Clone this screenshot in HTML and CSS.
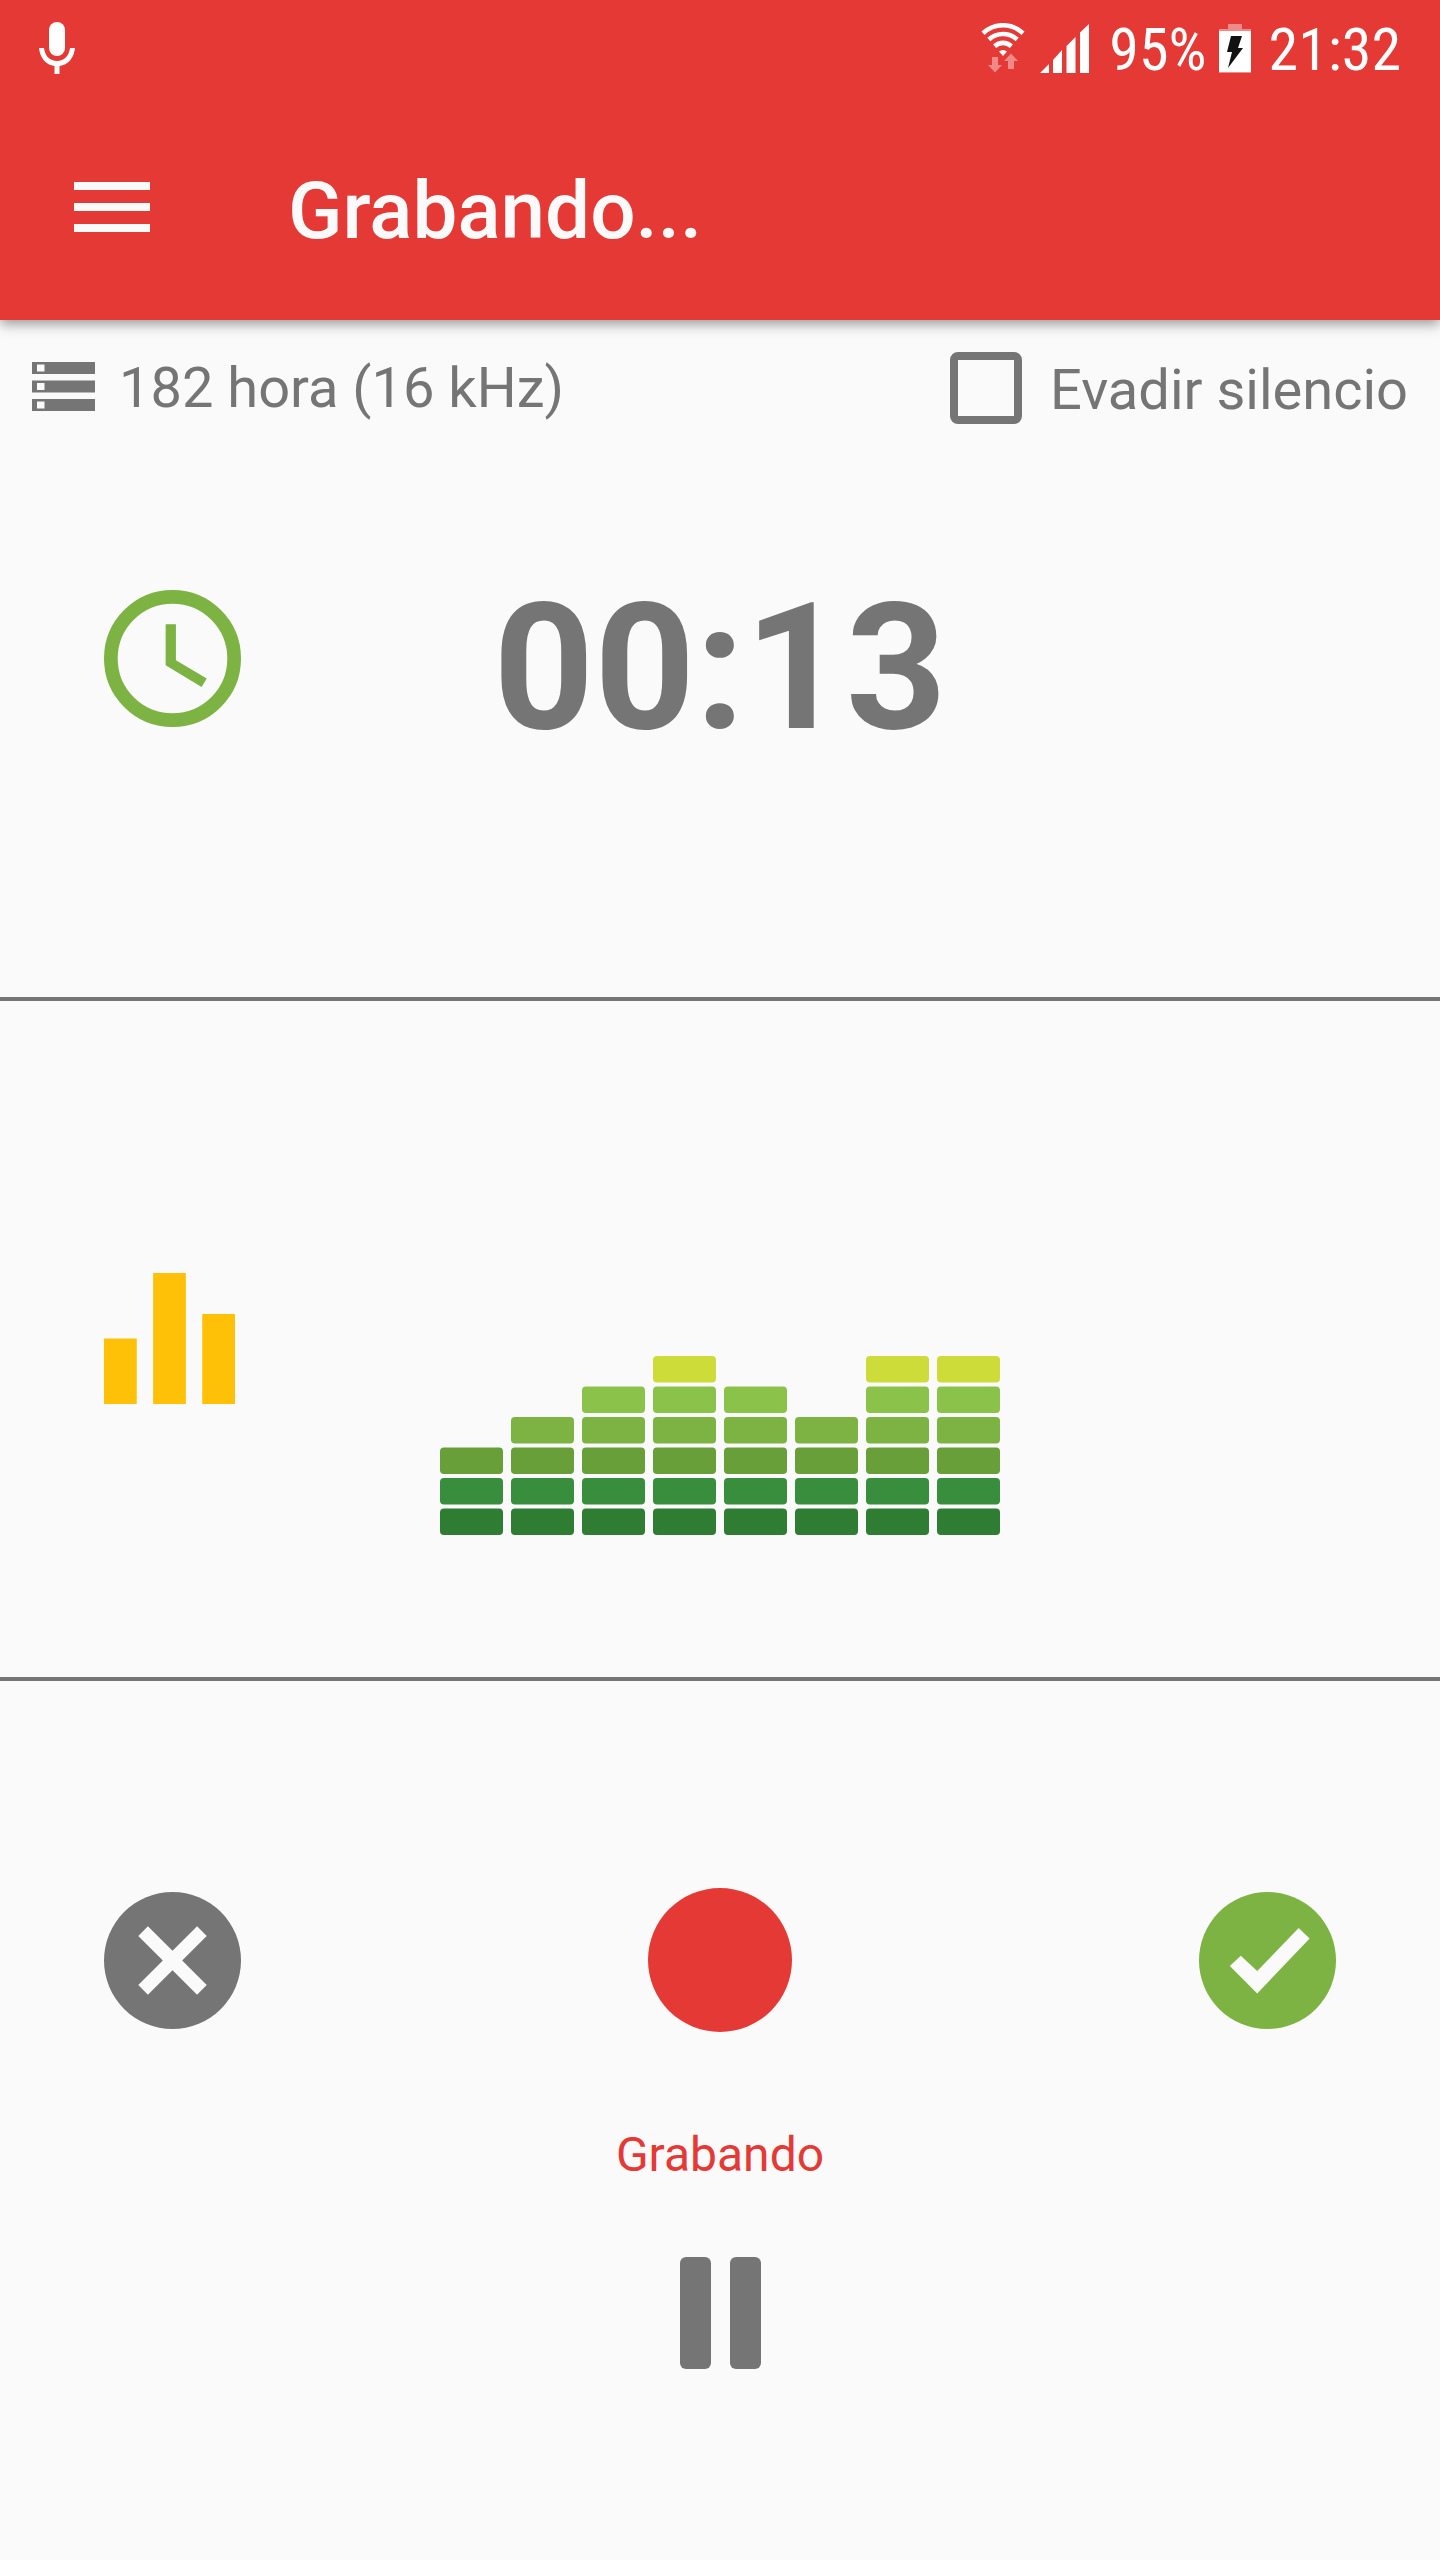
FILE: index.html
```html
<!DOCTYPE html>
<html lang="es">
<head>
    <meta charset="UTF-8">
    <meta name="viewport" content="width=device-width, initial-scale=1.0">
    <title>Grabando...</title>
    <link rel="stylesheet" href="styles.css">
</head>
<body>
    <header class="header">
        <!-- Barra de estado -->
        <div class="statusBar">
            <svg class="micIcon" viewBox="0 0 36 52" aria-hidden="true">
                <rect x="10" y="0" width="16" height="34" rx="8" fill="#fff"/>
                <path d="M0 26h5c1 8 6 13 13 13s12-5 13-13h5c-1 10-7 17-15.500 18v8h-5v-8C7 43 1 36 0 26z" fill="#fff"/>
            </svg>
            <div class="statusRight">
                <svg class="wifiIcon" viewBox="0 0 44 50" aria-hidden="true">
                    <g fill="none" stroke="#fff" stroke-width="4.600">
                        <path d="M2 10.200c11.500-10.600 28.500-10.600 40 0"/>
                        <path d="M7.800 16.500c8.200-7.300 20.200-7.300 28.400 0"/>
                        <path d="M13.600 23.200c5-4.400 11.800-4.400 16.800 0"/>
                    </g>
                    <path d="M18 28.500c2.500-2 5.500-2 8 0L22 33z" fill="#fff"/>
                    <path d="M11 34h6v8h4l-7 7.500L7 42h4zM27 46v-8h-4l7-7.500 7 7.500h-4v8z" fill="#f08a88"/>
                </svg>
                <svg class="signalIcon" viewBox="0 0 49 49" aria-hidden="true">
                    <path d="M0 49l9-9v9zM13 49V36l9-10v23zM26.500 49V22l9-9v36zM40 49V8.500L49 0v49z" fill="#fff"/>
                </svg>
                <span class="battery">95%</span>
                <svg class="batteryIcon" viewBox="0 0 32 49" aria-hidden="true">
                    <path d="M9 0h14v5h9v3H0V5h9zM0 47h32v2H0z" fill="#f08a88"/>
                    <path d="M0 7h32v41H0z" fill="#fff"/>
                    <path d="M12 12h11l-4 12h5L9 44l4-16H8z" fill="#111"/>
                </svg>
                <time class="clock">21:32</time>
            </div>
        </div>

        <!-- Barra de la aplicación -->
        <div class="toolbar">
            <button class="menuBtn" aria-label="Menú">
                <svg viewBox="0 0 76 50"><path d="M0 0h76v8H0zM0 21h76v8H0zM0 42h76v8H0z" fill="#fafafa"/></svg>
            </button>
            <h1>Grabando...</h1>
        </div>
    </header>

    <main>
        <!-- Tiempo -->
        <section class="timer">
            <div class="info">
                <div class="storage">
                    <svg viewBox="0 0 63 49" aria-hidden="true">
                        <path d="M0 0h63v12H0zM0 18.500h63v12H0zM0 37h63v12H0z" fill="#757575"/>
                        <path d="M5 2.500h7.500v7H5zM5 21h7.500v7H5zM5 39.500h7.500v7H5z" fill="#fafafa"/>
                    </svg>
                    <span>182 hora (16 kHz)</span>
                </div>
                <label class="silence">
                    <input type="checkbox">
                    <span>Evadir silencio</span>
                </label>
            </div>
            <div class="row timeRow">
                <svg class="clockIcon" viewBox="2 2 20 20" aria-hidden="true">
                    <circle cx="12" cy="12" r="9" fill="none" stroke="#7cb342" stroke-width="2"/>
                    <path d="M12.500 7H11v6l5.250 3.150.750-1.230-4.500-2.670z" fill="#7cb342"/>
                </svg>
                <div class="time">00:13</div>
            </div>
        </section>

        <!-- Nivel de sonido -->
        <section class="level">
            <div class="row">
                <svg class="levelIcon" viewBox="4 4 16 16" aria-hidden="true">
                    <path d="M10 20h4V4h-4v16zm-6 0h4v-8H4v8zM16 9v11h4V9h-4z" fill="#ffc107"/>
                </svg>
                <svg class="chart" viewBox="0 0 560 179" aria-hidden="true">
                    <defs>
                        <g id="n3">
                            <rect y="152.500" width="63" height="26.500" rx="4" fill="#2e7d32"/>
                            <rect y="122" width="63" height="26.500" rx="4" fill="#388e3c"/>
                            <rect y="91.500" width="63" height="26.500" rx="4" fill="#689f38"/>
                        </g>
                        <g id="n4">
                            <use href="#n3"/>
                            <rect y="61" width="63" height="26.500" rx="4" fill="#7cb342"/>
                        </g>
                        <g id="n5">
                            <use href="#n4"/>
                            <rect y="30.500" width="63" height="26.500" rx="4" fill="#8bc34a"/>
                        </g>
                        <g id="n6">
                            <use href="#n5"/>
                            <rect width="63" height="26.500" rx="4" fill="#cddc39"/>
                        </g>
                    </defs>
                    <use href="#n3" x="0"/>
                    <use href="#n4" x="71"/>
                    <use href="#n5" x="142"/>
                    <use href="#n6" x="213"/>
                    <use href="#n5" x="284"/>
                    <use href="#n4" x="355"/>
                    <use href="#n6" x="426"/>
                    <use href="#n6" x="497"/>
                </svg>
            </div>
        </section>

        <!-- Controles -->
        <section class="controls">
            <div class="buttons">
                <button class="roundBtn" aria-label="Cancelar">
                    <svg viewBox="2 2 20 20">
                        <circle cx="12" cy="12" r="10" fill="#757575"/>
                        <path d="M17 15.590L15.590 17 12 13.410 8.410 17 7 15.590 10.590 12 7 8.410 8.410 7 12 10.590 15.590 7 17 8.410 13.410 12z" fill="#fafafa"/>
                    </svg>
                </button>
                <button class="recordBtn" aria-label="Grabar"></button>
                <button class="roundBtn" aria-label="Aceptar">
                    <svg viewBox="2 2 20 20">
                        <circle cx="12" cy="12" r="10" fill="#7cb342"/>
                        <path d="M6.500 12.800L8.100 11.300l2.400 2.250 6.050-6.300 1.600 1.550-7.650 8z" fill="#fafafa"/>
                    </svg>
                </button>
            </div>
            <p class="state">Grabando</p>
            <button class="pauseBtn" aria-label="Pausa">
                <svg viewBox="0 0 81 112">
                    <rect width="31" height="112" rx="6" fill="#757575"/>
                    <rect x="50" width="31" height="112" rx="6" fill="#757575"/>
                </svg>
            </button>
        </section>
    </main>
</body>
</html>
```

FILE: styles.css
```css
* {
    box-sizing: border-box;
}

body {
    font-family: Roboto, "Noto Sans", sans-serif;
    margin: 0;
    background-color: #fafafa;
    color: #757575;
}

svg {
    display: block;
    flex: none;
}

button {
    background: none;
    border: none;
    padding: 0;
    cursor: pointer;
}

/* Cabecera */
.header {
    background-color: #e53935;
    color: #fafafa;
    box-shadow: 0 4px 12px rgba(0, 0, 0, 0.4);
}

.statusBar {
    display: flex;
    justify-content: space-between;
    align-items: center;
    height: 96px;
    padding: 0 39px;
}

.statusRight {
    display: flex;
    align-items: center;
    color: #fff;
    font-family: "Roboto Condensed", Roboto, sans-serif;
    font-size: 60px;
    line-height: 72px;
}

.micIcon {
    width: 36px;
    height: 52px;
}

.wifiIcon {
    width: 44px;
    height: 50px;
}

.signalIcon {
    width: 49px;
    height: 49px;
    margin-left: 15px;
}

.battery {
    margin: 0 12px 0 20px;
    padding-top: 4px;
}

.batteryIcon {
    width: 32px;
    height: 49px;
}

.clock {
    margin-left: 18px;
    padding-top: 4px;
}

.toolbar {
    display: flex;
    align-items: center;
    gap: 138px;
    height: 224px;
    padding: 0 74px 2px;
}

.menuBtn svg {
    width: 76px;
    height: 50px;
}

h1 {
    margin: 0;
    padding-top: 8px;
    font-size: 80px;
    font-weight: 500;
    line-height: 96px;
}

/* Tiempo */
.timer,
.level {
    border-bottom: 4px solid #757575;
}

.info {
    display: flex;
    justify-content: space-between;
    align-items: center;
    height: 136px;
    padding: 0 32px;
    font-size: 56px;
    line-height: 64px;
}

.storage,
.silence {
    display: flex;
    align-items: center;
    gap: 24px;
}

.storage svg {
    width: 63px;
    height: 49px;
    margin-bottom: 4px;
}

.silence {
    gap: 28px;
}

.silence span {
    padding-top: 4px;
}

.silence input {
    appearance: none;
    width: 72px;
    height: 72px;
    margin: 0;
    border: 8px solid #757575;
    border-radius: 8px;
}

.row {
    display: grid;
    grid-template-columns: 1fr auto 1fr;
    align-items: center;
    padding: 0 104px;
}

.timeRow {
    padding-top: 88px;
    padding-bottom: 225px;
}

.clockIcon {
    width: 137px;
    height: 137px;
}

.time {
    padding-top: 20px;
    font-size: 176px;
    font-weight: 700;
    line-height: 208px;
}

/* Nivel */
.level {
    padding: 272px 0 142px;
}

.level .row {
    align-items: start;
}

.levelIcon {
    width: 131px;
    height: 131px;
}

.chart {
    width: 560px;
    height: 179px;
    margin-top: 83px;
}

/* Controles */
.controls {
    display: flex;
    flex-direction: column;
    align-items: center;
    padding: 207px 0;
}

.buttons {
    display: flex;
    justify-content: space-between;
    align-items: center;
    width: 100%;
    padding: 0 104px;
}

.roundBtn svg {
    width: 137px;
    height: 137px;
}

.recordBtn {
    width: 144px;
    height: 144px;
    border-radius: 50%;
    background-color: #e53935;
}

.state {
    margin: 93px 0 72px;
    color: #e53935;
    font-size: 48px;
    line-height: 60px;
}

.pauseBtn svg {
    width: 81px;
    height: 112px;
}
```
